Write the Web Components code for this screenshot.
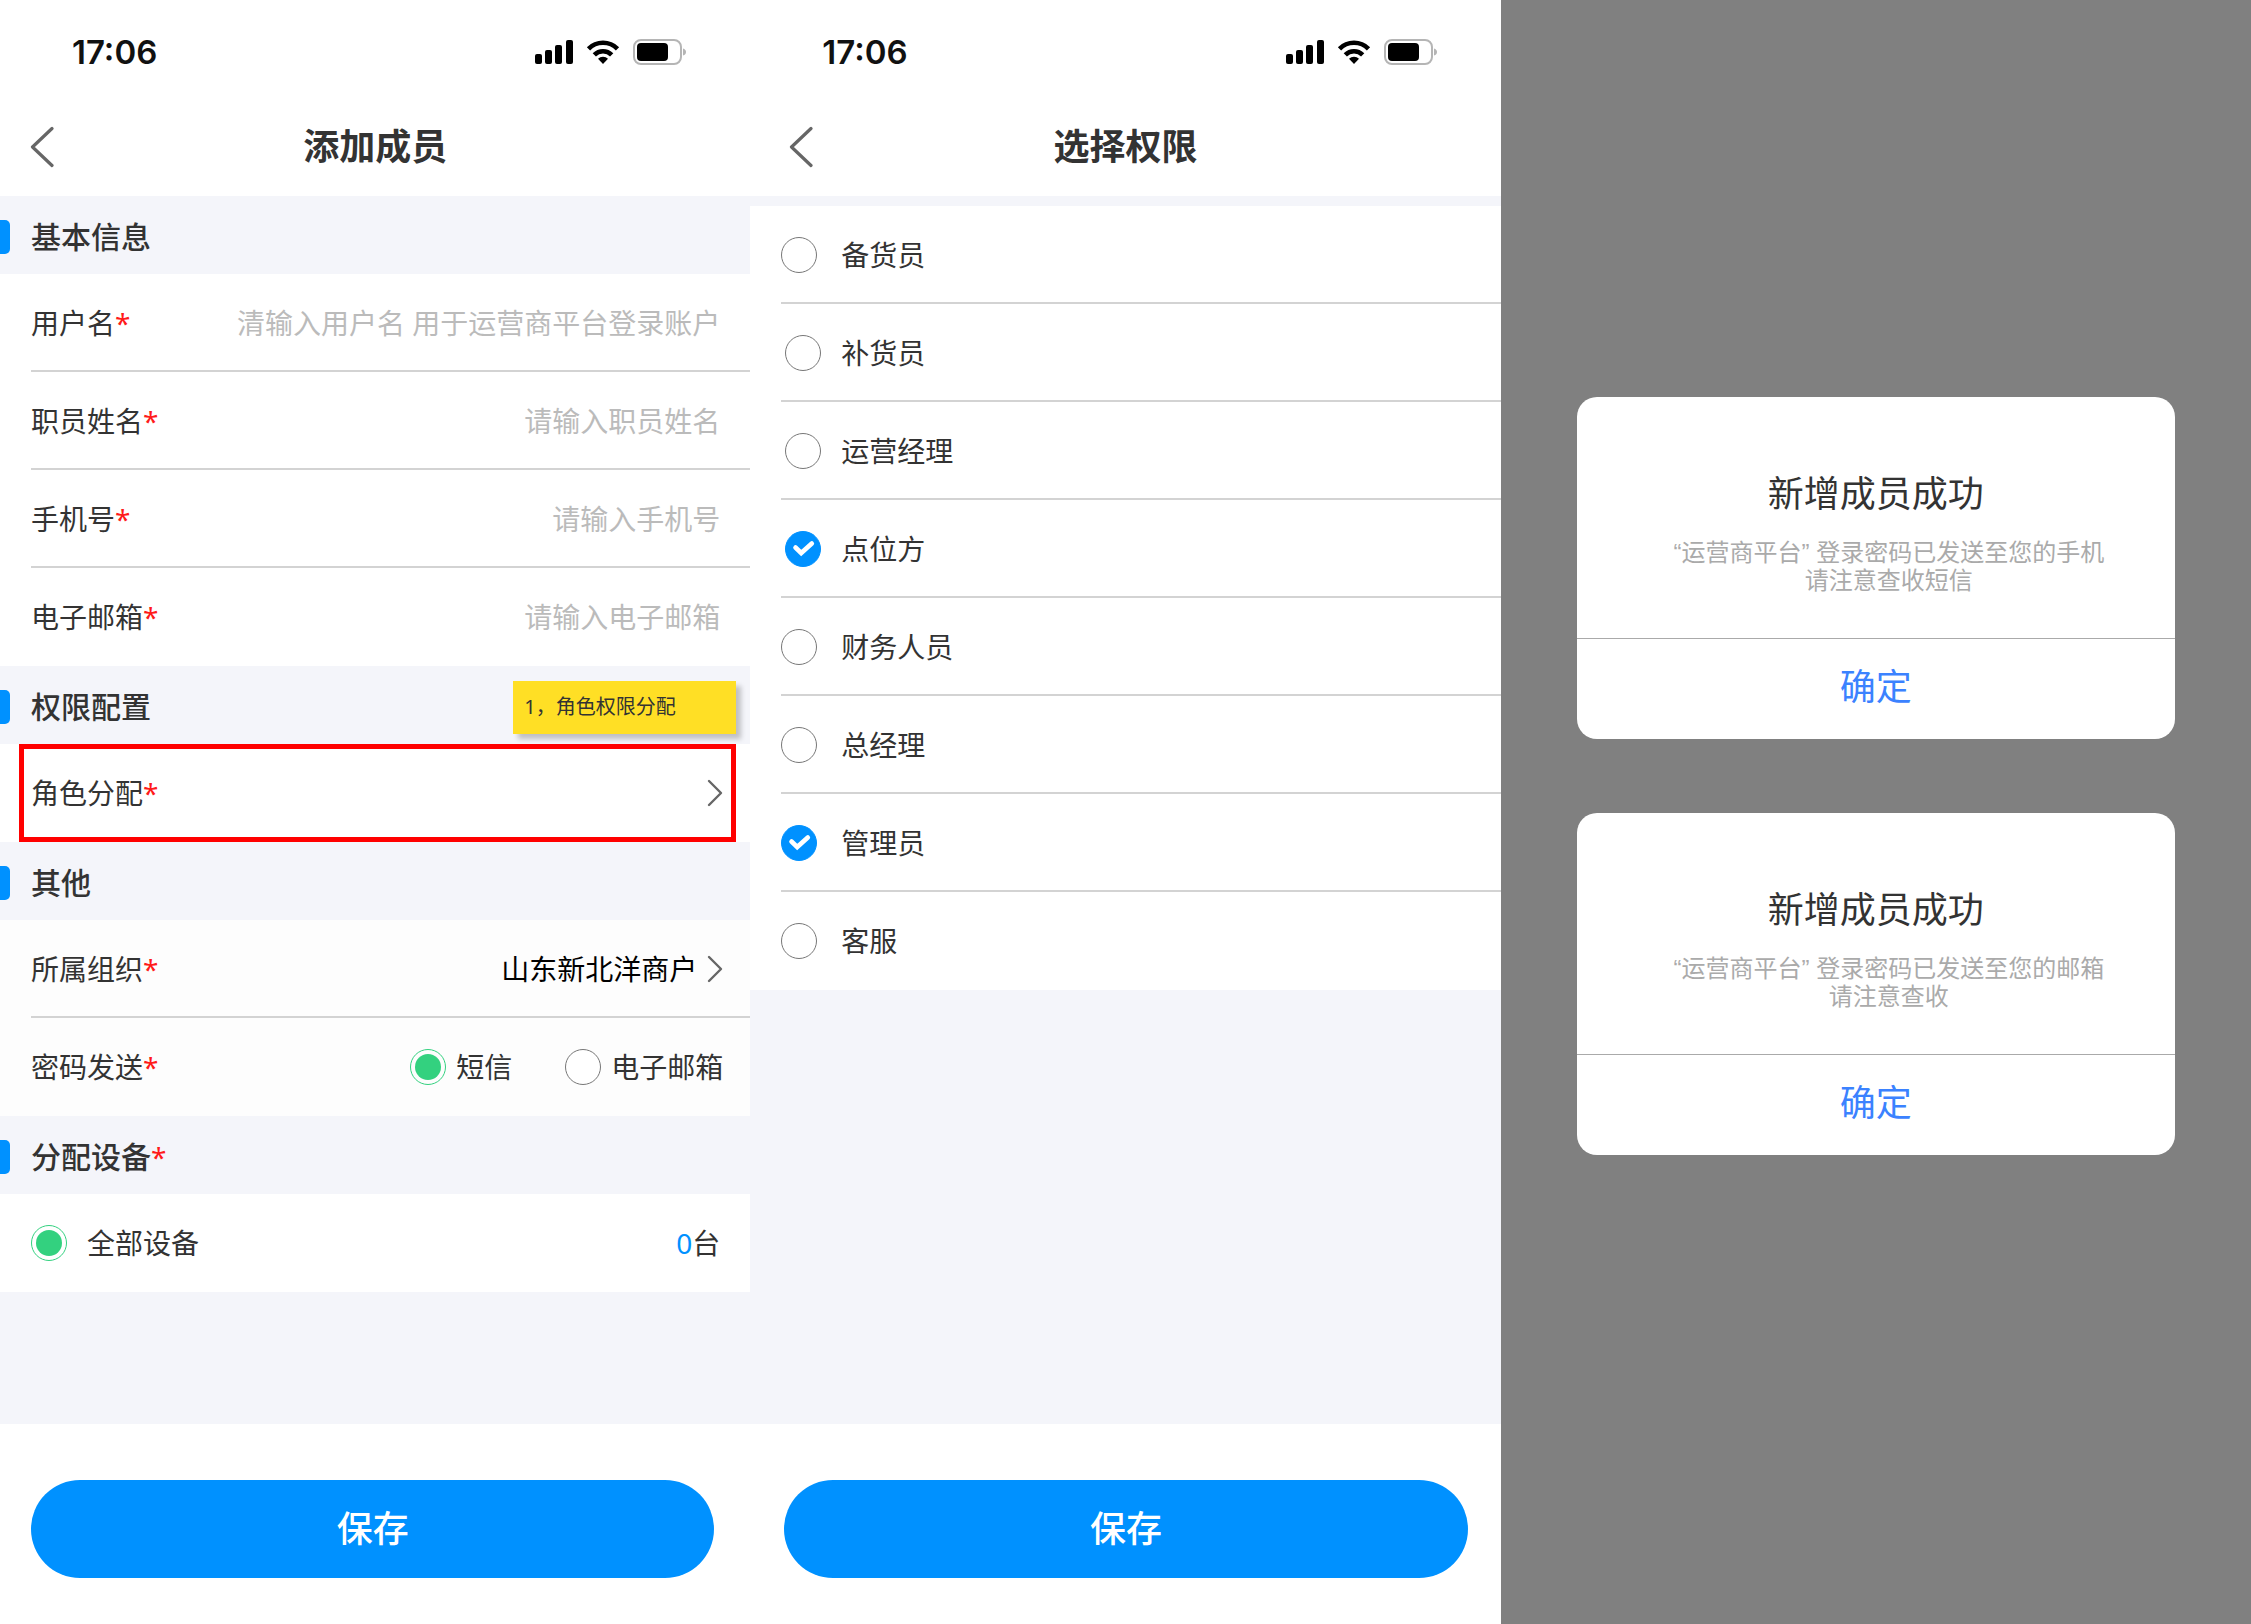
<!DOCTYPE html>
<html lang="zh-CN">
<head>
<meta charset="utf-8">
<meta name="viewport" content="width=device-width, initial-scale=1">
<title>添加成员</title>
<style>
  body {
    margin: 0;
    min-height: 100vh;
    display: grid;
    grid-template-columns: repeat(3, minmax(0, 1fr));
    font-family: "Noto Sans", "Noto Sans CJK SC", sans-serif;
    font-size: 28px;
    line-height: 40px;
    color: #333;
    background: #f4f5fa;
  }

  #add-member {
    --back-start: 30px;
    --action-start: 31px;
    --action-end: 36px;
  }

  #choose-role {
    --back-start: 39px;
    --action-start: 34px;
    --action-end: 33px;
  }

  .options {
    margin-top: 10px;
  }
</style>
</head>
<body>

<phone-screen id="add-member" heading="添加成员" action="保存">
  <section-title>基本信息</section-title>
  <form-field label="用户名" hint="清输入用户名 用于运营商平台登录账户"></form-field>
  <form-field label="职员姓名" hint="请输入职员姓名"></form-field>
  <form-field label="手机号" hint="请输入手机号" type="tel"></form-field>
  <form-field label="电子邮箱" hint="请输入电子邮箱" type="email" last></form-field>

  <section-title>权限配置<sticky-note slot="note">1，角色权限分配</sticky-note></section-title>
  <link-row label="角色分配" highlight last></link-row>

  <section-title>其他</section-title>
  <link-row label="所属组织" value="山东新北洋商户" muted></link-row>
  <choice-row label="密码发送" options="短信,电子邮箱"></choice-row>

  <section-title required>分配设备</section-title>
  <device-row label="全部设备" count="0" unit="台"></device-row>
</phone-screen>

<phone-screen id="choose-role" heading="选择权限" action="保存">
  <div class="options">
    <option-row>备货员</option-row>
    <option-row nested>补货员</option-row>
    <option-row nested>运营经理</option-row>
    <option-row nested checked>点位方</option-row>
    <option-row>财务人员</option-row>
    <option-row>总经理</option-row>
    <option-row checked>管理员</option-row>
    <option-row last>客服</option-row>
  </div>
</phone-screen>

<dialog-stage>
  <result-dialog heading="新增成员成功" confirm="确定">“运营商平台” 登录密码已发送至您的手机<br>请注意查收短信</result-dialog>
  <result-dialog heading="新增成员成功" confirm="确定">“运营商平台” 登录密码已发送至您的邮箱<br>请注意查收</result-dialog>
</dialog-stage>

<script>
// shared by every shadow root
const base = `
  :host, * { box-sizing: border-box; }
  button, input { font: inherit; color: inherit; }
  button { border: 0; margin: 0; padding: 0; background: none; cursor: pointer; }
  .required { color: #ff1a1a; }
`;

const rowStyles = `
  :host { display: block; background: #fff; }
  :host([muted]) { background: #fdfdfd; }
  .row {
    display: flex;
    align-items: center;
    height: 98px;
    margin-left: 31px;
    padding: 2px 30px 0 0;
    border-bottom: 2px solid #d3d3d3;
  }
  :host([last]) .row { border-bottom-color: transparent; }
`;

const radioStyles = `
  input[type=radio] {
    appearance: none;
    flex: none;
    width: 36px;
    height: 36px;
    margin: 0;
    border: 1px solid #777;
    border-radius: 50%;
    background: #fff;
  }
  input[type=radio]:checked {
    border-color: #33d17f;
    padding: 4px;
    background: #33d17f content-box;
  }
`;

const chevronRight = `
  <svg width="16" height="28" viewBox="0 0 16 28" fill="none" stroke="#666" stroke-width="2.4" stroke-linecap="round" stroke-linejoin="round">
    <path d="M2 2 14 14 2 26"/>
  </svg>
`;

class BaseElement extends HTMLElement {
  connectedCallback() {
    if (this.shadowRoot) return;
    this.attachShadow({ mode: 'open' });
    this.shadowRoot.innerHTML = `<style>${base}${this.styles()}</style>${this.render()}`;
  }

  attr(name) {
    return this.getAttribute(name) || '';
  }
}

class StatusBar extends BaseElement {
  styles() {
    return `
      :host {
        display: flex;
        align-items: center;
        justify-content: space-between;
        height: 96px;
        padding: 8px 63px 0 72px;
        color: #111;
      }
      .time { font: 600 33px/40px Inter, sans-serif; }
      .icons { display: flex; align-items: center; gap: 13px; }
      svg { display: block; }
    `;
  }

  render() {
    return `
      <span class="time">17:06</span>
      <span class="icons">
        <svg width="38" height="26" viewBox="0 0 38 26" fill="#000">
          <rect x="0" y="15" width="7" height="10" rx="2"/>
          <rect x="10" y="11" width="7" height="14" rx="2"/>
          <rect x="20" y="6" width="7" height="19" rx="2"/>
          <rect x="31" y="1" width="7" height="24" rx="2"/>
        </svg>
        <svg width="34" height="26" viewBox="0 0 34 26" fill="none" stroke="#000" stroke-width="4.6">
          <path d="M2.5 9.8A20.5 20.5 0 0 1 31.5 9.8"/>
          <path d="M8.3 15.8A12.3 12.3 0 0 1 25.7 15.8"/>
          <path d="M17 25 12 19.8A7 7 0 0 1 22 19.8Z" fill="#000" stroke="none"/>
        </svg>
        <svg width="54" height="26" viewBox="0 0 54 26">
          <rect x="1" y="1" width="47" height="24" rx="7" fill="#fff" stroke="#b5b5b5" stroke-width="2"/>
          <rect x="4" y="4" width="31" height="18" rx="4" fill="#000"/>
          <path d="M50 9.5Q53 10.5 53 13T50 16.5Z" fill="#b5b5b5"/>
        </svg>
      </span>
    `;
  }
}

class PhoneScreen extends BaseElement {
  styles() {
    return `
      :host { display: flex; flex-direction: column; }
      header { background: #fff; }
      nav {
        display: grid;
        grid-template-columns: 80px 1fr 80px;
        align-items: center;
        height: 100px;
        padding-top: 2px;
      }
      .back { display: flex; padding-left: var(--back-start); }
      h1 { margin: 0; font-size: 36px; line-height: 48px; font-weight: 700; text-align: center; }
      main { flex: 1; }
      footer {
        height: 200px;
        padding: 56px var(--action-end) 0 var(--action-start);
        background: #fff;
      }
      .action {
        width: 100%;
        height: 98px;
        border-radius: 49px;
        background: #0091ff;
        color: #fff;
        font-size: 36px;
        font-weight: 500;
      }
    `;
  }

  render() {
    return `
      <header>
        <status-bar></status-bar>
        <nav>
          <button class="back" aria-label="返回">
            <svg width="24" height="42" viewBox="0 0 24 42" fill="none" stroke="#666" stroke-width="3.2" stroke-linecap="round" stroke-linejoin="round">
              <path d="M22 2.5 2.5 21 22 39.5"/>
            </svg>
          </button>
          <h1>${this.attr('heading')}</h1>
        </nav>
      </header>
      <main><slot></slot></main>
      <footer><button class="action">${this.attr('action')}</button></footer>
    `;
  }
}

class SectionTitle extends BaseElement {
  styles() {
    return `
      :host {
        display: flex;
        align-items: center;
        height: 78px;
        padding: 4px 14px 0 0;
        background: #f4f5fa;
      }
      .marker { width: 10px; height: 34px; border-radius: 0 5px 5px 0; background: #0091ff; }
      h2 { margin: 0 auto 0 21px; font-size: 30px; line-height: 40px; font-weight: 500; }
      .required { font-size: 28px; font-weight: 400; }
    `;
  }

  render() {
    const star = this.hasAttribute('required') ? '<span class="required">*</span>' : '';
    return `<span class="marker"></span><h2><slot></slot>${star}</h2><slot name="note"></slot>`;
  }
}

class StickyNote extends BaseElement {
  styles() {
    return `
      :host {
        display: block;
        width: 223px;
        padding: 12px 11px 13px;
        background: #ffdf25;
        box-shadow: 5px 5px 5px rgba(0, 0, 0, 0.22);
        font-size: 20px;
        line-height: 28px;
      }
    `;
  }

  render() {
    return '<slot></slot>';
  }
}

class FormField extends BaseElement {
  styles() {
    return rowStyles + `
      label { flex: none; }
      input {
        flex: 1;
        min-width: 0;
        height: 60px;
        padding: 0;
        border: 0;
        outline: 0;
        background: none;
        text-align: right;
      }
      input::placeholder { color: #bbb; opacity: 1; }
    `;
  }

  render() {
    return `
      <div class="row">
        <label for="field">${this.attr('label')}<span class="required">*</span></label>
        <input id="field" type="${this.attr('type') || 'text'}" placeholder="${this.attr('hint')}">
      </div>
    `;
  }
}

class LinkRow extends BaseElement {
  styles() {
    return rowStyles + `
      :host { position: relative; }
      :host([highlight])::after {
        content: "";
        position: absolute;
        inset: 0 14px 0 19px;
        border: 5px solid #f00;
        pointer-events: none;
      }
      button { flex: 1; display: flex; align-items: center; gap: 10px; text-align: left; }
      .row { padding-right: 27px; }
      .value { margin-left: auto; color: #000; }
    `;
  }

  render() {
    return `
      <div class="row">
        <button>
          <span>${this.attr('label')}<span class="required">*</span></span>
          <span class="value">${this.attr('value')}</span>
          ${chevronRight}
        </button>
      </div>
    `;
  }
}

class ChoiceRow extends BaseElement {
  styles() {
    return rowStyles + radioStyles + `
      :host { background: #fdfdfd; }
      .row { padding-right: 27px; border-bottom-color: transparent; }
      .choices { display: flex; gap: 53px; margin-left: auto; }
      label { display: flex; align-items: center; gap: 10px; }
    `;
  }

  render() {
    const choices = this.attr('options').split(',').map((text, i) => `
      <label><input type="radio" name="choice"${i === 0 ? ' checked' : ''}>${text}</label>
    `).join('');
    return `
      <div class="row" role="radiogroup" aria-labelledby="name">
        <span id="name">${this.attr('label')}<span class="required">*</span></span>
        <div class="choices">${choices}</div>
      </div>
    `;
  }
}

class DeviceRow extends BaseElement {
  styles() {
    return rowStyles + radioStyles + `
      .row { border-bottom-color: transparent; }
      label { display: flex; align-items: center; gap: 20px; }
      .count { margin-left: auto; }
      .number { color: #0091ff; }
    `;
  }

  render() {
    return `
      <div class="row">
        <label><input type="radio" name="device" checked>${this.attr('label')}</label>
        <span class="count"><span class="number">${this.attr('count')}</span>${this.attr('unit')}</span>
      </div>
    `;
  }
}

class OptionRow extends BaseElement {
  styles() {
    return rowStyles + `
      label { flex: 1; display: grid; grid-template-columns: 44px 1fr; gap: 16px; align-items: center; }
      .mark { display: grid; width: 36px; height: 36px; }
      :host([nested]) .mark { justify-self: center; }
      .mark > * { grid-area: 1 / 1; }
      input {
        appearance: none;
        width: 36px;
        height: 36px;
        margin: 0;
        border: 1px solid #777;
        border-radius: 50%;
      }
      input:checked { border-color: #0091ff; background: #0091ff; }
      svg { visibility: hidden; pointer-events: none; }
      input:checked + svg { visibility: visible; }
    `;
  }

  render() {
    return `
      <div class="row">
        <label>
          <span class="mark">
            <input type="checkbox"${this.hasAttribute('checked') ? ' checked' : ''}>
            <svg width="36" height="36" viewBox="0 0 36 36" fill="none" stroke="#fff" stroke-width="4.6">
              <path d="M10.5 16.5 16.2 22 26.8 12.500" stroke-linecap="round" stroke-linejoin="miter"/>
            </svg>
          </span>
          <span><slot></slot></span>
        </label>
      </div>
    `;
  }
}

class DialogStage extends BaseElement {
  styles() {
    return `
      :host {
        display: flex;
        flex-direction: column;
        justify-content: center;
        gap: 74px;
        padding: 0 76px 72px;
        background: #808080;
      }
    `;
  }

  render() {
    return '<slot></slot>';
  }
}

class ResultDialog extends BaseElement {
  styles() {
    return `
      :host {
        display: flex;
        flex-direction: column;
        height: 342px;
        border-radius: 20px;
        background: #fff;
        text-align: center;
        overflow: hidden;
        font-family: "Liberation Sans", "Noto Sans CJK SC", sans-serif;
      }
      h2 { margin: 74px 0 0; font-size: 36px; line-height: 48px; font-weight: 400; }
      p {
        flex: 1;
        margin: 20px 0 0;
        padding-left: 26px;
        font-size: 24px;
        line-height: 28px;
        color: #aaa;
      }
      button {
        height: 101px;
        padding-bottom: 2px;
        border-top: 1px solid #aaa;
        color: #3b82ff;
        font-size: 36px;
      }
    `;
  }

  render() {
    return `
      <h2>${this.attr('heading')}</h2>
      <p><slot></slot></p>
      <button>${this.attr('confirm')}</button>
    `;
  }
}

customElements.define('status-bar', StatusBar);
customElements.define('phone-screen', PhoneScreen);
customElements.define('section-title', SectionTitle);
customElements.define('sticky-note', StickyNote);
customElements.define('form-field', FormField);
customElements.define('link-row', LinkRow);
customElements.define('choice-row', ChoiceRow);
customElements.define('device-row', DeviceRow);
customElements.define('option-row', OptionRow);
customElements.define('dialog-stage', DialogStage);
customElements.define('result-dialog', ResultDialog);
</script>
</body>
</html>
